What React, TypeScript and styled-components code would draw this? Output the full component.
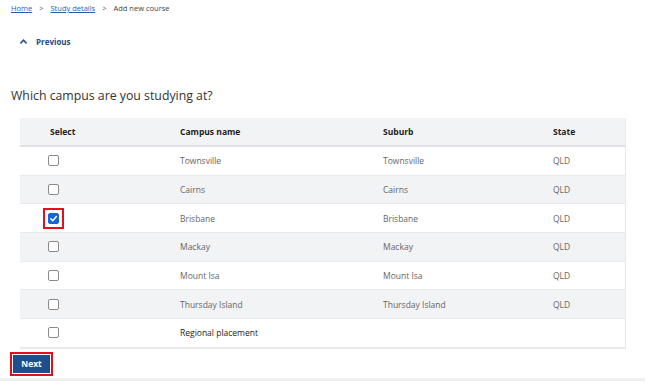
import React from 'react';
import styled, { createGlobalStyle } from 'styled-components';

const GlobalStyle = createGlobalStyle`
  html, body {
    margin: 0;
    padding: 0;
    background: #ffffff;
    font-family: "Open Sans", "Noto Sans", Arial, sans-serif;
  }
`;

type Campus = { name: string; suburb: string; state: string; checked?: boolean; strong?: boolean };

const campuses: Campus[] = [
  { name: 'Townsville', suburb: 'Townsville', state: 'QLD' },
  { name: 'Cairns', suburb: 'Cairns', state: 'QLD' },
  { name: 'Brisbane', suburb: 'Brisbane', state: 'QLD', checked: true },
  { name: 'Mackay', suburb: 'Mackay', state: 'QLD' },
  { name: 'Mount Isa', suburb: 'Mount Isa', state: 'QLD' },
  { name: 'Thursday Island', suburb: 'Thursday Island', state: 'QLD' },
  { name: 'Regional placement', suburb: '', state: '', strong: true },
];

const Page = styled.div`
  width: 650px;
  height: 390px;
  overflow: hidden;
  display: flex;
  flex-direction: column;
`;

const Crumbs = styled.nav`
  display: flex;
  align-items: center;
  gap: 7px;
  padding: 2px 0 0 11px;
  height: 12px;
  font-size: 7.5px;
  color: #444;
`;

const CrumbLink = styled.a`
  color: #1a5fb4;
  text-decoration: underline;
`;

const Sep = styled.span`
  color: #555;
`;

const Back = styled.button`
  display: flex;
  align-items: center;
  gap: 9px;
  margin: 22px 0 0 20px;
  padding: 0;
  border: none;
  background: none;
  font-family: inherit;
  font-size: 8px;
  font-weight: 700;
  color: #2a4a85;
  align-self: flex-start;
`;

const Heading = styled.h2`
  margin: 40px 0 0 11px;
  font-size: 12.3px;
  font-weight: 400;
  color: #333;
`;

const Table = styled.div`
  margin: 14px 0 0 20px;
  width: 605px;
  border-right: 1px solid #e6e8eb;
  border-bottom: 1px solid #e6e8eb;
`;

const Row = styled.div<{ $shade?: boolean; $head?: boolean }>`
  display: grid;
  grid-template-columns: 160px 203px 170px 1fr;
  align-items: center;
  box-sizing: border-box;
  height: ${p => (p.$head ? 29 : 28.7)}px;
  background: ${p => (p.$shade ? '#f2f3f5' : '#ffffff')};
  border-bottom: ${p => (p.$head ? '2px solid #dfe1e5' : '1px solid #e8eaed')};
  font-size: 8.5px;
  color: ${p => (p.$head ? '#222' : '#666')};
  font-weight: ${p => (p.$head ? 700 : 400)};
`;

const Cell = styled.div<{ $strong?: boolean }>`
  color: ${p => (p.$strong ? '#222' : 'inherit')};
  &:first-child {
    padding-left: 30px;
  }
`;

const BoxCell = styled.div`
  padding-left: 28px;
  display: flex;
  align-items: center;
`;

const Focus = styled.span<{ $on?: boolean }>`
  display: inline-flex;
  align-items: center;
  justify-content: center;
  width: 21px;
  height: 21px;
  margin: 0 0 0 -5px;
  border: 2px solid ${p => (p.$on ? '#e3101b' : 'transparent')};
  box-sizing: border-box;
`;

const Box = styled.span<{ $on?: boolean }>`
  width: 11px;
  height: 11px;
  box-sizing: border-box;
  border-radius: 2px;
  border: 1px solid ${p => (p.$on ? '#1565d8' : '#8a8a8a')};
  background: ${p => (p.$on ? '#1565d8' : '#fff')};
  display: flex;
  align-items: center;
  justify-content: center;
`;

const NextWrap = styled.div`
  margin: 3px 0 0 10px;
  align-self: flex-start;
  border: 2px solid #e3101b;
  padding: 1px;
  display: flex;
`;

const NextButton = styled.button`
  background: #1f4e8e;
  color: #fff;
  border: none;
  font-family: inherit;
  font-weight: 700;
  font-size: 8.5px;
  width: 37px;
  height: 18px;
  padding: 0;
`;

const Footer = styled.div`
  margin-top: 2px;
  width: 645px;
  height: 3px;
  background: #eeeff1;
`;

const Check = () => (
  <svg width="9" height="9" viewBox="0 0 10 10">
    <path d="M2 5.2 L4.2 7.4 L8.2 2.8" fill="none" stroke="#fff" strokeWidth="1.6" strokeLinecap="round" strokeLinejoin="round" />
  </svg>
);

const Caret = () => (
  <svg width="7" height="5" viewBox="0 0 8 5">
    <path d="M0.5 4.6 L4 1 L7.5 4.6" fill="none" stroke="#2a4a85" strokeWidth="1.8" />
  </svg>
);

export default function App() {
  return (
    <Page>
      <GlobalStyle />
      <Crumbs>
        <CrumbLink>Home</CrumbLink>
        <Sep>&gt;</Sep>
        <CrumbLink>Study details</CrumbLink>
        <Sep>&gt;</Sep>
        <span>Add new course</span>
      </Crumbs>
      <Back>
        <Caret />
        Previous
      </Back>
      <Heading>Which campus are you studying at?</Heading>
      <Table>
        <Row $head $shade>
          <Cell>Select</Cell>
          <Cell>Campus name</Cell>
          <Cell>Suburb</Cell>
          <Cell>State</Cell>
        </Row>
        {campuses.map((c, i) => (
          <Row key={c.name} $shade={i % 2 === 1}>
            <BoxCell>
              <Focus $on={c.checked}>
                <Box $on={c.checked}>{c.checked && <Check />}</Box>
              </Focus>
            </BoxCell>
            <Cell $strong={c.strong}>{c.name}</Cell>
            <Cell>{c.suburb}</Cell>
            <Cell>{c.state}</Cell>
          </Row>
        ))}
      </Table>
      <NextWrap>
        <NextButton>Next</NextButton>
      </NextWrap>
      <Footer />
    </Page>
  );
}
